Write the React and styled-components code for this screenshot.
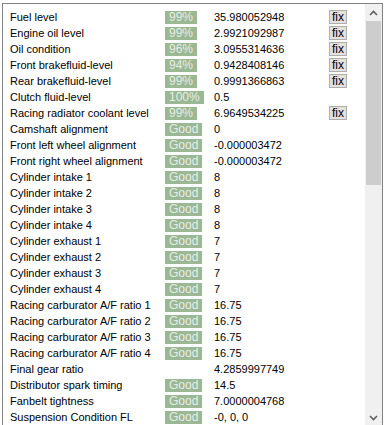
import React from 'react'
import styled, { createGlobalStyle } from 'styled-components'

const GlobalStyle = createGlobalStyle`
    html, body {
        margin: 0;
        padding: 0;
        background: #fff;
        overflow: hidden;
    }
    body {
        font-family: 'Liberation Sans', Arial, sans-serif;
        font-size: 11px;
        color: #000;
    }
`

const rows = [
    { label: 'Fuel level', badge: '99%', value: '35.980052948', fix: true },
    { label: 'Engine oil level', badge: '99%', value: '2.9921092987', fix: true },
    { label: 'Oil condition', badge: '96%', value: '3.0955314636', fix: true },
    { label: 'Front brakefluid-level', badge: '94%', value: '0.9428408146', fix: true },
    { label: 'Rear brakefluid-level', badge: '99%', value: '0.9991366863', fix: true },
    { label: 'Clutch fluid-level', badge: '100%', value: '0.5' },
    { label: 'Racing radiator coolant level', badge: '99%', value: '6.9649534225', fix: true },
    { label: 'Camshaft alignment', badge: 'Good', value: '0' },
    { label: 'Front left wheel alignment', badge: 'Good', value: '-0.000003472' },
    { label: 'Front right wheel alignment', badge: 'Good', value: '-0.000003472' },
    { label: 'Cylinder intake 1', badge: 'Good', value: '8' },
    { label: 'Cylinder intake 2', badge: 'Good', value: '8' },
    { label: 'Cylinder intake 3', badge: 'Good', value: '8' },
    { label: 'Cylinder intake 4', badge: 'Good', value: '8' },
    { label: 'Cylinder exhaust 1', badge: 'Good', value: '7' },
    { label: 'Cylinder exhaust 2', badge: 'Good', value: '7' },
    { label: 'Cylinder exhaust 3', badge: 'Good', value: '7' },
    { label: 'Cylinder exhaust 4', badge: 'Good', value: '7' },
    { label: 'Racing carburator A/F ratio 1', badge: 'Good', value: '16.75' },
    { label: 'Racing carburator A/F ratio 2', badge: 'Good', value: '16.75' },
    { label: 'Racing carburator A/F ratio 3', badge: 'Good', value: '16.75' },
    { label: 'Racing carburator A/F ratio 4', badge: 'Good', value: '16.75' },
    { label: 'Final gear ratio', value: '4.2859997749' },
    { label: 'Distributor spark timing', badge: 'Good', value: '14.5' },
    { label: 'Fanbelt tightness', badge: 'Good', value: '7.0000004768' },
    { label: 'Suspension Condition FL', badge: 'Good', value: '-0, 0, 0' },
]

function Arrow({ up }) {
    return (
        <svg width="9" height="6" viewBox="0 0 9 6">
            <polyline
                points={up ? '1,5 4.5,1.5 8,5' : '1,1 4.5,4.5 8,1'}
                fill="none"
                stroke="#606060"
                strokeWidth="1.6"
            />
        </svg>
    )
}

export default function App() {
    return (
        <>
            <GlobalStyle />
            <Frame>
                <List>
                    {rows.map((r, i) => (
                        <Row key={i}>
                            <Label>{r.label}</Label>
                            <div>{r.badge && <Badge>{r.badge}</Badge>}</div>
                            <Value>{r.value}</Value>
                            <div>{r.fix && <FixButton>fix</FixButton>}</div>
                        </Row>
                    ))}
                </List>
                <ScrollBar>
                    <ScrollButton><Arrow up /></ScrollButton>
                    <Track>
                        <Thumb />
                    </Track>
                    <ScrollButton><Arrow /></ScrollButton>
                </ScrollBar>
            </Frame>
        </>
    )
}

const Frame = styled.div`
    display: flex;
    margin: 3px 0 0 2px;
    width: 379px;
    height: 422px;
    border: 1px solid #828282;
    border-bottom: none;
    background: #fff;
`

const List = styled.div`
    flex: 1;
    padding: 5px 0 0 7px;
    overflow: hidden;
`

const Row = styled.div`
    display: grid;
    grid-template-columns: 155px 49px 115px 20px;
    align-items: center;
    height: 16px;
    white-space: nowrap;
`

const Label = styled.span`
    line-height: 16px;
`

const Value = styled.span`
    line-height: 16px;
`

const Badge = styled.span`
    display: inline-block;
    height: 13px;
    line-height: 13px;
    padding: 0 4px 0 4px;
    background: #9ab893;
    color: #e6eee4;
    font-size: 12px;
    vertical-align: middle;
`

const FixButton = styled.button`
    display: block;
    width: 18px;
    height: 14px;
    padding: 0;
    border: 1px solid #adadad;
    background: #e1e1e1;
    font-family: inherit;
    font-size: 12px;
    line-height: 11px;
    color: #000;
`

const ScrollBar = styled.div`
    display: flex;
    flex-direction: column;
    width: 17px;
    background: #f0f0f0;
`

const ScrollButton = styled.div`
    display: flex;
    align-items: center;
    justify-content: center;
    height: 17px;
`

const Track = styled.div`
    flex: 1;
`

const Thumb = styled.div`
    margin: 0 1px;
    height: 164px;
    background: #cdcdcd;
`
